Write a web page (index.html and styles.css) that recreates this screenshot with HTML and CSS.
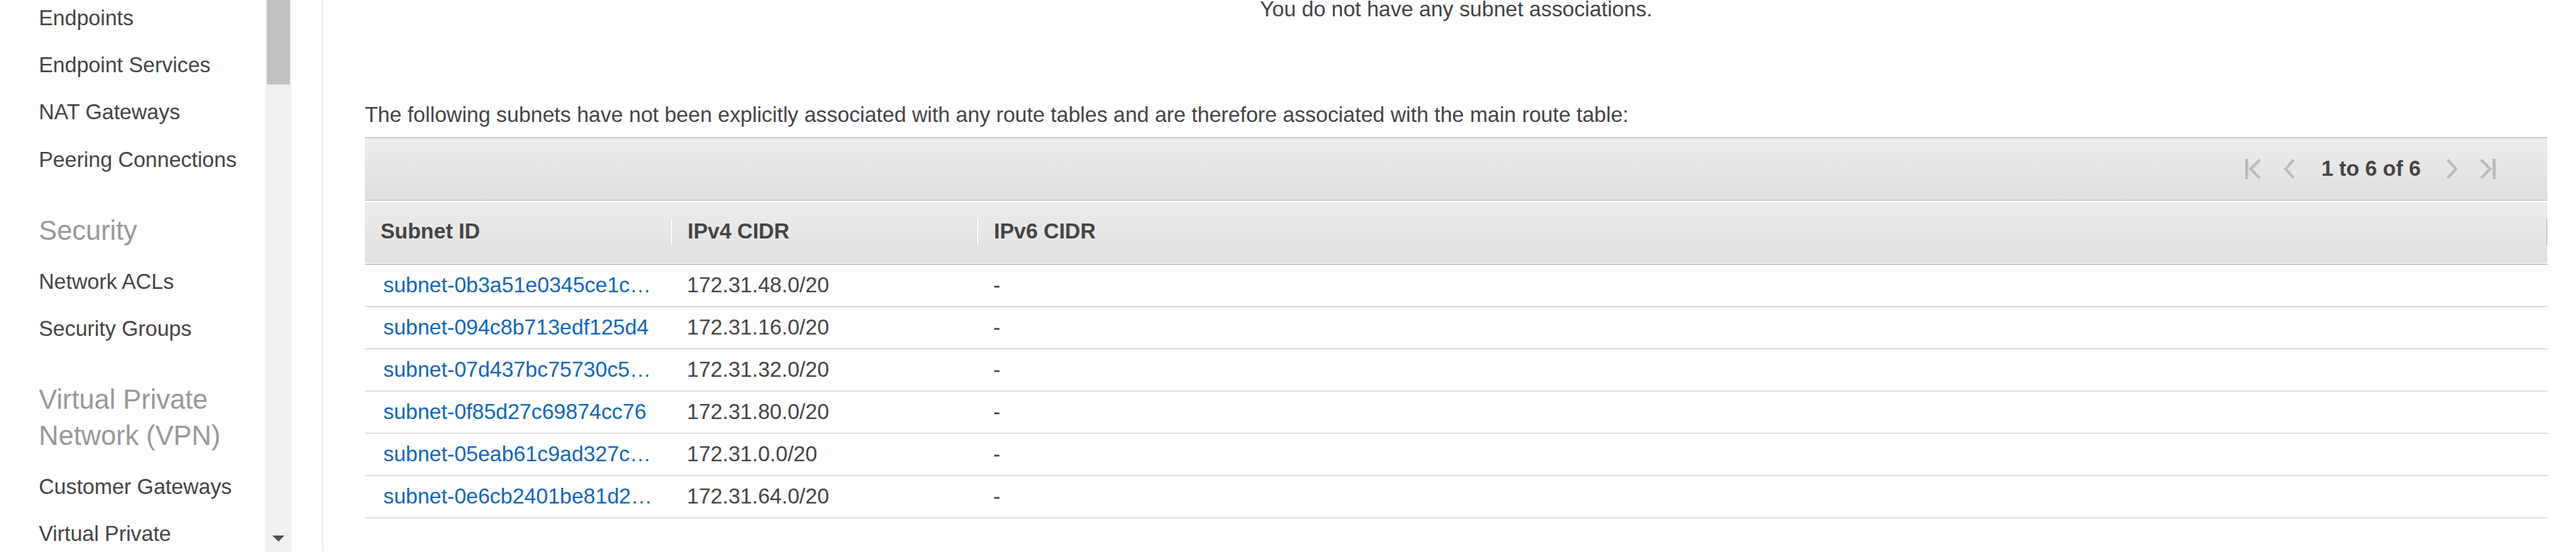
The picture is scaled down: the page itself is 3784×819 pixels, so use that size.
FILE: index.html
```html
<!DOCTYPE html>
<html lang="en">
<head>
<meta charset="utf-8">
<title>Route table subnet associations</title>
<link rel="stylesheet" href="styles.css">
</head>
<body>
<div class="app">
  <nav class="sidebar">
    <ul class="nav">
      <li class="item">Endpoints</li>
      <li class="item">Endpoint Services</li>
      <li class="item">NAT Gateways</li>
      <li class="item">Peering Connections</li>
      <li class="section">Security</li>
      <li class="item">Network ACLs</li>
      <li class="item">Security Groups</li>
      <li class="section">Virtual Private<br>Network (VPN)</li>
      <li class="item">Customer Gateways</li>
      <li class="item">Virtual Private</li>
    </ul>
  </nav>
  <div class="scrollbar">
    <div class="thumb"></div>
    <div class="arrow-down"></div>
  </div>
  <div class="gutter"></div>
  <main class="content">
    <p class="empty">You do not have any subnet associations.</p>
    <p class="intro">The following subnets have not been explicitly associated with any route tables and are therefore associated with the main route table:</p>
    <div class="grid">
      <div class="toolbar">
        <div class="pager">
          <svg class="ic ic-first" width="24" height="30" viewBox="0 0 24 30"><rect x="0" y="0" width="4.5" height="30" fill="#bbb"/><polyline points="21.5,1.5 8,15 21.5,28.5" fill="none" stroke="#bbb" stroke-width="4"/></svg>
          <svg class="ic ic-prev" width="16" height="30" viewBox="0 0 16 30"><polyline points="14.5,1.5 2.5,15 14.5,28.5" fill="none" stroke="#bbb" stroke-width="4"/></svg>
          <span class="count">1 to 6 of 6</span>
          <svg class="ic ic-next" width="16" height="30" viewBox="0 0 16 30"><polyline points="1.5,1.5 13.5,15 1.5,28.5" fill="none" stroke="#bbb" stroke-width="4"/></svg>
          <svg class="ic ic-last" width="24" height="30" viewBox="0 0 24 30"><polyline points="2.5,1.5 16,15 2.5,28.5" fill="none" stroke="#bbb" stroke-width="4"/><rect x="19.5" y="0" width="4.5" height="30" fill="#bbb"/></svg>
        </div>
      </div>
      <div class="thead">
        <div class="th th-first">Subnet ID</div>
        <div class="th th-div">IPv4 CIDR</div>
        <div class="th th-div th-last">IPv6 CIDR</div>
      </div>
      <div class="row"><div class="td td-first"><a class="link">subnet-0b3a51e0345ce1c…</a></div><div class="td">172.31.48.0/20</div><div class="td">-</div></div>
      <div class="row"><div class="td td-first"><a class="link">subnet-094c8b713edf125d4</a></div><div class="td">172.31.16.0/20</div><div class="td">-</div></div>
      <div class="row"><div class="td td-first"><a class="link">subnet-07d437bc75730c5…</a></div><div class="td">172.31.32.0/20</div><div class="td">-</div></div>
      <div class="row"><div class="td td-first"><a class="link">subnet-0f85d27c69874cc76</a></div><div class="td">172.31.80.0/20</div><div class="td">-</div></div>
      <div class="row"><div class="td td-first"><a class="link">subnet-05eab61c9ad327c…</a></div><div class="td">172.31.0.0/20</div><div class="td">-</div></div>
      <div class="row"><div class="td td-first"><a class="link">subnet-0e6cb2401be81d2…</a></div><div class="td">172.31.64.0/20</div><div class="td">-</div></div>
    </div>
  </main>
</div>
</body>
</html>
```

FILE: styles.css
```css
html, body {
  margin: 0;
  padding: 0;
  background: #fff;
}
body {
  width: 3784px;
  height: 819px;
  overflow: hidden;
  font-family: "Liberation Sans", Arial, sans-serif;
  font-size: 31.3px;
  color: #444;
}
.app {
  display: flex;
  height: 810px;
  overflow: hidden;
}

/* sidebar */
.sidebar {
  width: 390px;
  flex: none;
  box-sizing: border-box;
  padding-left: 57px;
  overflow: hidden;
}
.nav {
  list-style: none;
  margin: -8.2px 0 0;
  padding: 0;
}
.item {
  line-height: 69.3px;
  white-space: nowrap;
  color: #444;
}
.section {
  font-size: 40px;
  line-height: 52.7px;
  color: #999;
  margin: 43px 0 14px;
}

/* fake scrollbar */
.scrollbar {
  width: 38px;
  flex: none;
  background: #f1f1f1;
  display: flex;
  flex-direction: column;
  align-items: center;
}
.thumb {
  width: 34px;
  height: 124px;
  background: #c1c1c1;
}
.arrow-down {
  margin-top: auto;
  margin-bottom: 15px;
  width: 0;
  height: 0;
  border-left: 9px solid transparent;
  border-right: 9px solid transparent;
  border-top: 9px solid #505050;
}
.gutter {
  width: 45px;
  flex: none;
  border-right: 2px solid #ececec;
}

/* main content */
.content {
  flex: 1;
  min-width: 0;
  box-sizing: border-box;
  padding: 0 42px 0 61px;
}
.empty {
  margin: -10.5px 0 0;
  line-height: 47px;
  text-align: center;
}
.intro {
  margin: 108.2px 0 0;
  line-height: 47px;
}
.grid {
  margin-top: 9.3px;
}
.toolbar {
  height: 90px;
  border-top: 2px solid #ccc;
  border-bottom: 2px solid #ccc;
  background: linear-gradient(#ececec, #e0e0e0);
  display: flex;
  justify-content: flex-end;
  align-items: center;
}
.pager {
  display: flex;
  align-items: center;
  padding-right: 76px;
}
.ic {
  display: block;
  flex: none;
}
.ic-prev { margin-left: 33px; }
.count {
  margin-left: 39px;
  font-weight: bold;
  color: #444;
  white-space: nowrap;
}
.ic-next { margin-left: 38px; }
.ic-last { margin-left: 32px; }

.thead {
  display: grid;
  grid-template-columns: 449px 450px 1fr;
  height: 90px;
  border-top: 2px solid #fff;
  border-bottom: 2px solid #ccc;
  box-shadow: inset 0 -1px 0 #fff;
  background: linear-gradient(#ececec, #e1e1e1);
}
.th {
  display: flex;
  align-items: center;
  padding: 0 0 4px 23px;
  font-weight: bold;
  white-space: nowrap;
  position: relative;
}
.th-div {
  padding-left: 25px;
}
.th-div::before {
  content: "";
  position: absolute;
  left: 0;
  top: 24px;
  width: 2px;
  height: 38px;
  background: #fdfdfd;
  box-shadow: -1px 0 0 #d8d8d8;
}
.th-last::after {
  content: "";
  position: absolute;
  right: 0;
  top: 24px;
  width: 2px;
  height: 40px;
  background: #ccc;
}
.row {
  display: grid;
  grid-template-columns: 449px 450px 1fr;
  height: 60px;
  border-bottom: 2px solid #e0e0e0;
}
.td {
  display: flex;
  align-items: center;
  padding-left: 24px;
  white-space: nowrap;
  overflow: hidden;
}
.td-first {
  padding-left: 27px;
}
.link {
  color: #1166bb;
  text-decoration: none;
}
```
